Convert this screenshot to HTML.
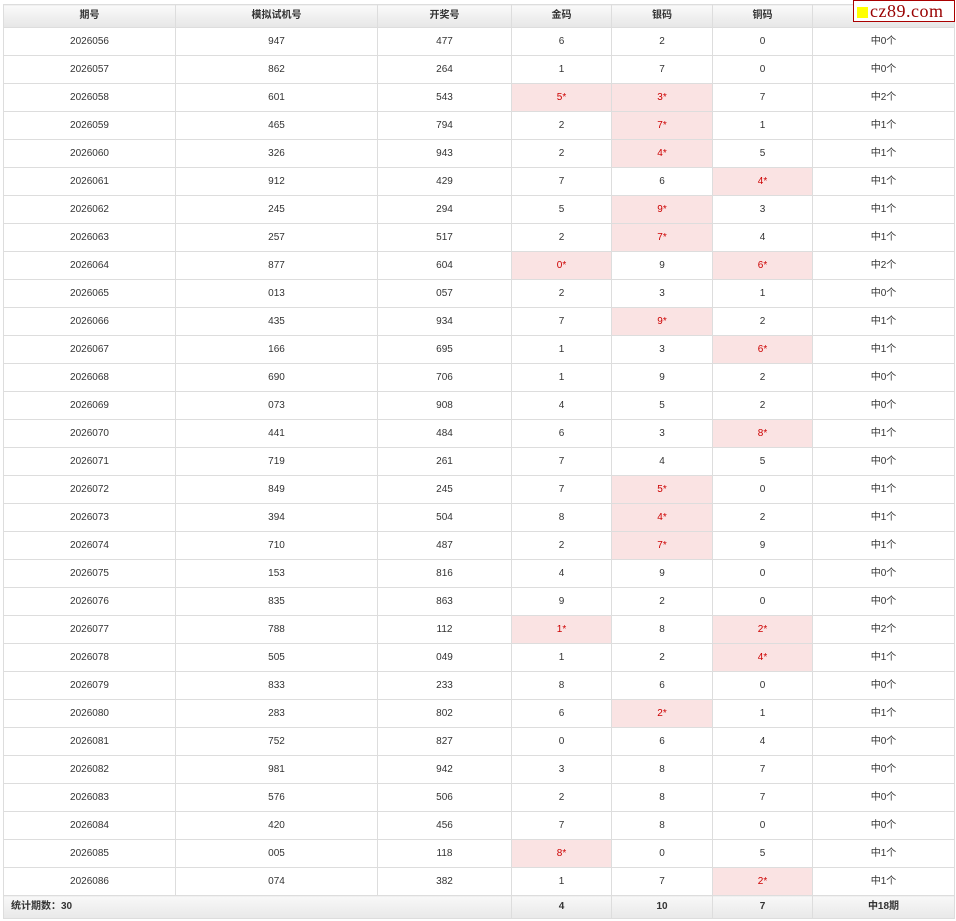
<!DOCTYPE html>
<html><head><meta charset="utf-8"><style>
body{margin:0;background:#fff;font-family:"Liberation Sans","Noto Sans CJK SC",sans-serif;font-size:10px;color:#333}
table{position:absolute;left:3px;top:4px;border-collapse:collapse;table-layout:fixed;width:951px}
td,th{border:1px solid #ddd;text-align:center;padding:0;height:27px;line-height:12px;vertical-align:middle;white-space:nowrap;overflow:hidden}
th{height:22px;font-weight:bold;background:linear-gradient(#fafafa,#e6e6e6);font-size:10px;color:#333}
td.h{background:#fae3e3;color:#c00}
tr.f td{background:linear-gradient(#f8f8f8,#e8e8e8);font-weight:bold;height:22px}
.c span{display:block;height:12px;line-height:12px}
.logo{position:absolute;left:853px;top:0;width:100px;height:20px;border:1px solid #a00;background:#fff;font-family:"Liberation Serif",serif;font-size:18px;color:#900;line-height:20px;letter-spacing:0.5px}
.logo i{display:inline-block;width:11px;height:11px;background:#ff0;margin:0 2px 0 3px;vertical-align:-1px}
</style></head><body>
<table>
<colgroup><col style="width:172px"><col style="width:202px"><col style="width:134px"><col style="width:100px"><col style="width:101px"><col style="width:100px"><col style="width:142px"></colgroup>
<tr><th>期号</th><th>模拟试机号</th><th>开奖号</th><th>金码</th><th>银码</th><th>铜码</th><th>结果</th></tr>
<tbody>
<tr><td>2026056</td><td>947</td><td>477</td><td>6</td><td>2</td><td>0</td><td class="c"><span>中0个</span></td></tr>
<tr><td>2026057</td><td>862</td><td>264</td><td>1</td><td>7</td><td>0</td><td class="c"><span>中0个</span></td></tr>
<tr><td>2026058</td><td>601</td><td>543</td><td class="h">5*</td><td class="h">3*</td><td>7</td><td class="c"><span>中2个</span></td></tr>
<tr><td>2026059</td><td>465</td><td>794</td><td>2</td><td class="h">7*</td><td>1</td><td class="c"><span>中1个</span></td></tr>
<tr><td>2026060</td><td>326</td><td>943</td><td>2</td><td class="h">4*</td><td>5</td><td class="c"><span>中1个</span></td></tr>
<tr><td>2026061</td><td>912</td><td>429</td><td>7</td><td>6</td><td class="h">4*</td><td class="c"><span>中1个</span></td></tr>
<tr><td>2026062</td><td>245</td><td>294</td><td>5</td><td class="h">9*</td><td>3</td><td class="c"><span>中1个</span></td></tr>
<tr><td>2026063</td><td>257</td><td>517</td><td>2</td><td class="h">7*</td><td>4</td><td class="c"><span>中1个</span></td></tr>
<tr><td>2026064</td><td>877</td><td>604</td><td class="h">0*</td><td>9</td><td class="h">6*</td><td class="c"><span>中2个</span></td></tr>
<tr><td>2026065</td><td>013</td><td>057</td><td>2</td><td>3</td><td>1</td><td class="c"><span>中0个</span></td></tr>
<tr><td>2026066</td><td>435</td><td>934</td><td>7</td><td class="h">9*</td><td>2</td><td class="c"><span>中1个</span></td></tr>
<tr><td>2026067</td><td>166</td><td>695</td><td>1</td><td>3</td><td class="h">6*</td><td class="c"><span>中1个</span></td></tr>
<tr><td>2026068</td><td>690</td><td>706</td><td>1</td><td>9</td><td>2</td><td class="c"><span>中0个</span></td></tr>
<tr><td>2026069</td><td>073</td><td>908</td><td>4</td><td>5</td><td>2</td><td class="c"><span>中0个</span></td></tr>
<tr><td>2026070</td><td>441</td><td>484</td><td>6</td><td>3</td><td class="h">8*</td><td class="c"><span>中1个</span></td></tr>
<tr><td>2026071</td><td>719</td><td>261</td><td>7</td><td>4</td><td>5</td><td class="c"><span>中0个</span></td></tr>
<tr><td>2026072</td><td>849</td><td>245</td><td>7</td><td class="h">5*</td><td>0</td><td class="c"><span>中1个</span></td></tr>
<tr><td>2026073</td><td>394</td><td>504</td><td>8</td><td class="h">4*</td><td>2</td><td class="c"><span>中1个</span></td></tr>
<tr><td>2026074</td><td>710</td><td>487</td><td>2</td><td class="h">7*</td><td>9</td><td class="c"><span>中1个</span></td></tr>
<tr><td>2026075</td><td>153</td><td>816</td><td>4</td><td>9</td><td>0</td><td class="c"><span>中0个</span></td></tr>
<tr><td>2026076</td><td>835</td><td>863</td><td>9</td><td>2</td><td>0</td><td class="c"><span>中0个</span></td></tr>
<tr><td>2026077</td><td>788</td><td>112</td><td class="h">1*</td><td>8</td><td class="h">2*</td><td class="c"><span>中2个</span></td></tr>
<tr><td>2026078</td><td>505</td><td>049</td><td>1</td><td>2</td><td class="h">4*</td><td class="c"><span>中1个</span></td></tr>
<tr><td>2026079</td><td>833</td><td>233</td><td>8</td><td>6</td><td>0</td><td class="c"><span>中0个</span></td></tr>
<tr><td>2026080</td><td>283</td><td>802</td><td>6</td><td class="h">2*</td><td>1</td><td class="c"><span>中1个</span></td></tr>
<tr><td>2026081</td><td>752</td><td>827</td><td>0</td><td>6</td><td>4</td><td class="c"><span>中0个</span></td></tr>
<tr><td>2026082</td><td>981</td><td>942</td><td>3</td><td>8</td><td>7</td><td class="c"><span>中0个</span></td></tr>
<tr><td>2026083</td><td>576</td><td>506</td><td>2</td><td>8</td><td>7</td><td class="c"><span>中0个</span></td></tr>
<tr><td>2026084</td><td>420</td><td>456</td><td>7</td><td>8</td><td>0</td><td class="c"><span>中0个</span></td></tr>
<tr><td>2026085</td><td>005</td><td>118</td><td class="h">8*</td><td>0</td><td>5</td><td class="c"><span>中1个</span></td></tr>
<tr><td>2026086</td><td>074</td><td>382</td><td>1</td><td>7</td><td class="h">2*</td><td class="c"><span>中1个</span></td></tr>
<tr class="f"><td colspan="3" style="text-align:left;padding-left:7px">统计期数：30</td><td>4</td><td>10</td><td>7</td><td class="c"><span>中18期</span></td></tr>
</tbody></table>
<div class="logo"><i></i>cz89.com</div>
</body></html>
